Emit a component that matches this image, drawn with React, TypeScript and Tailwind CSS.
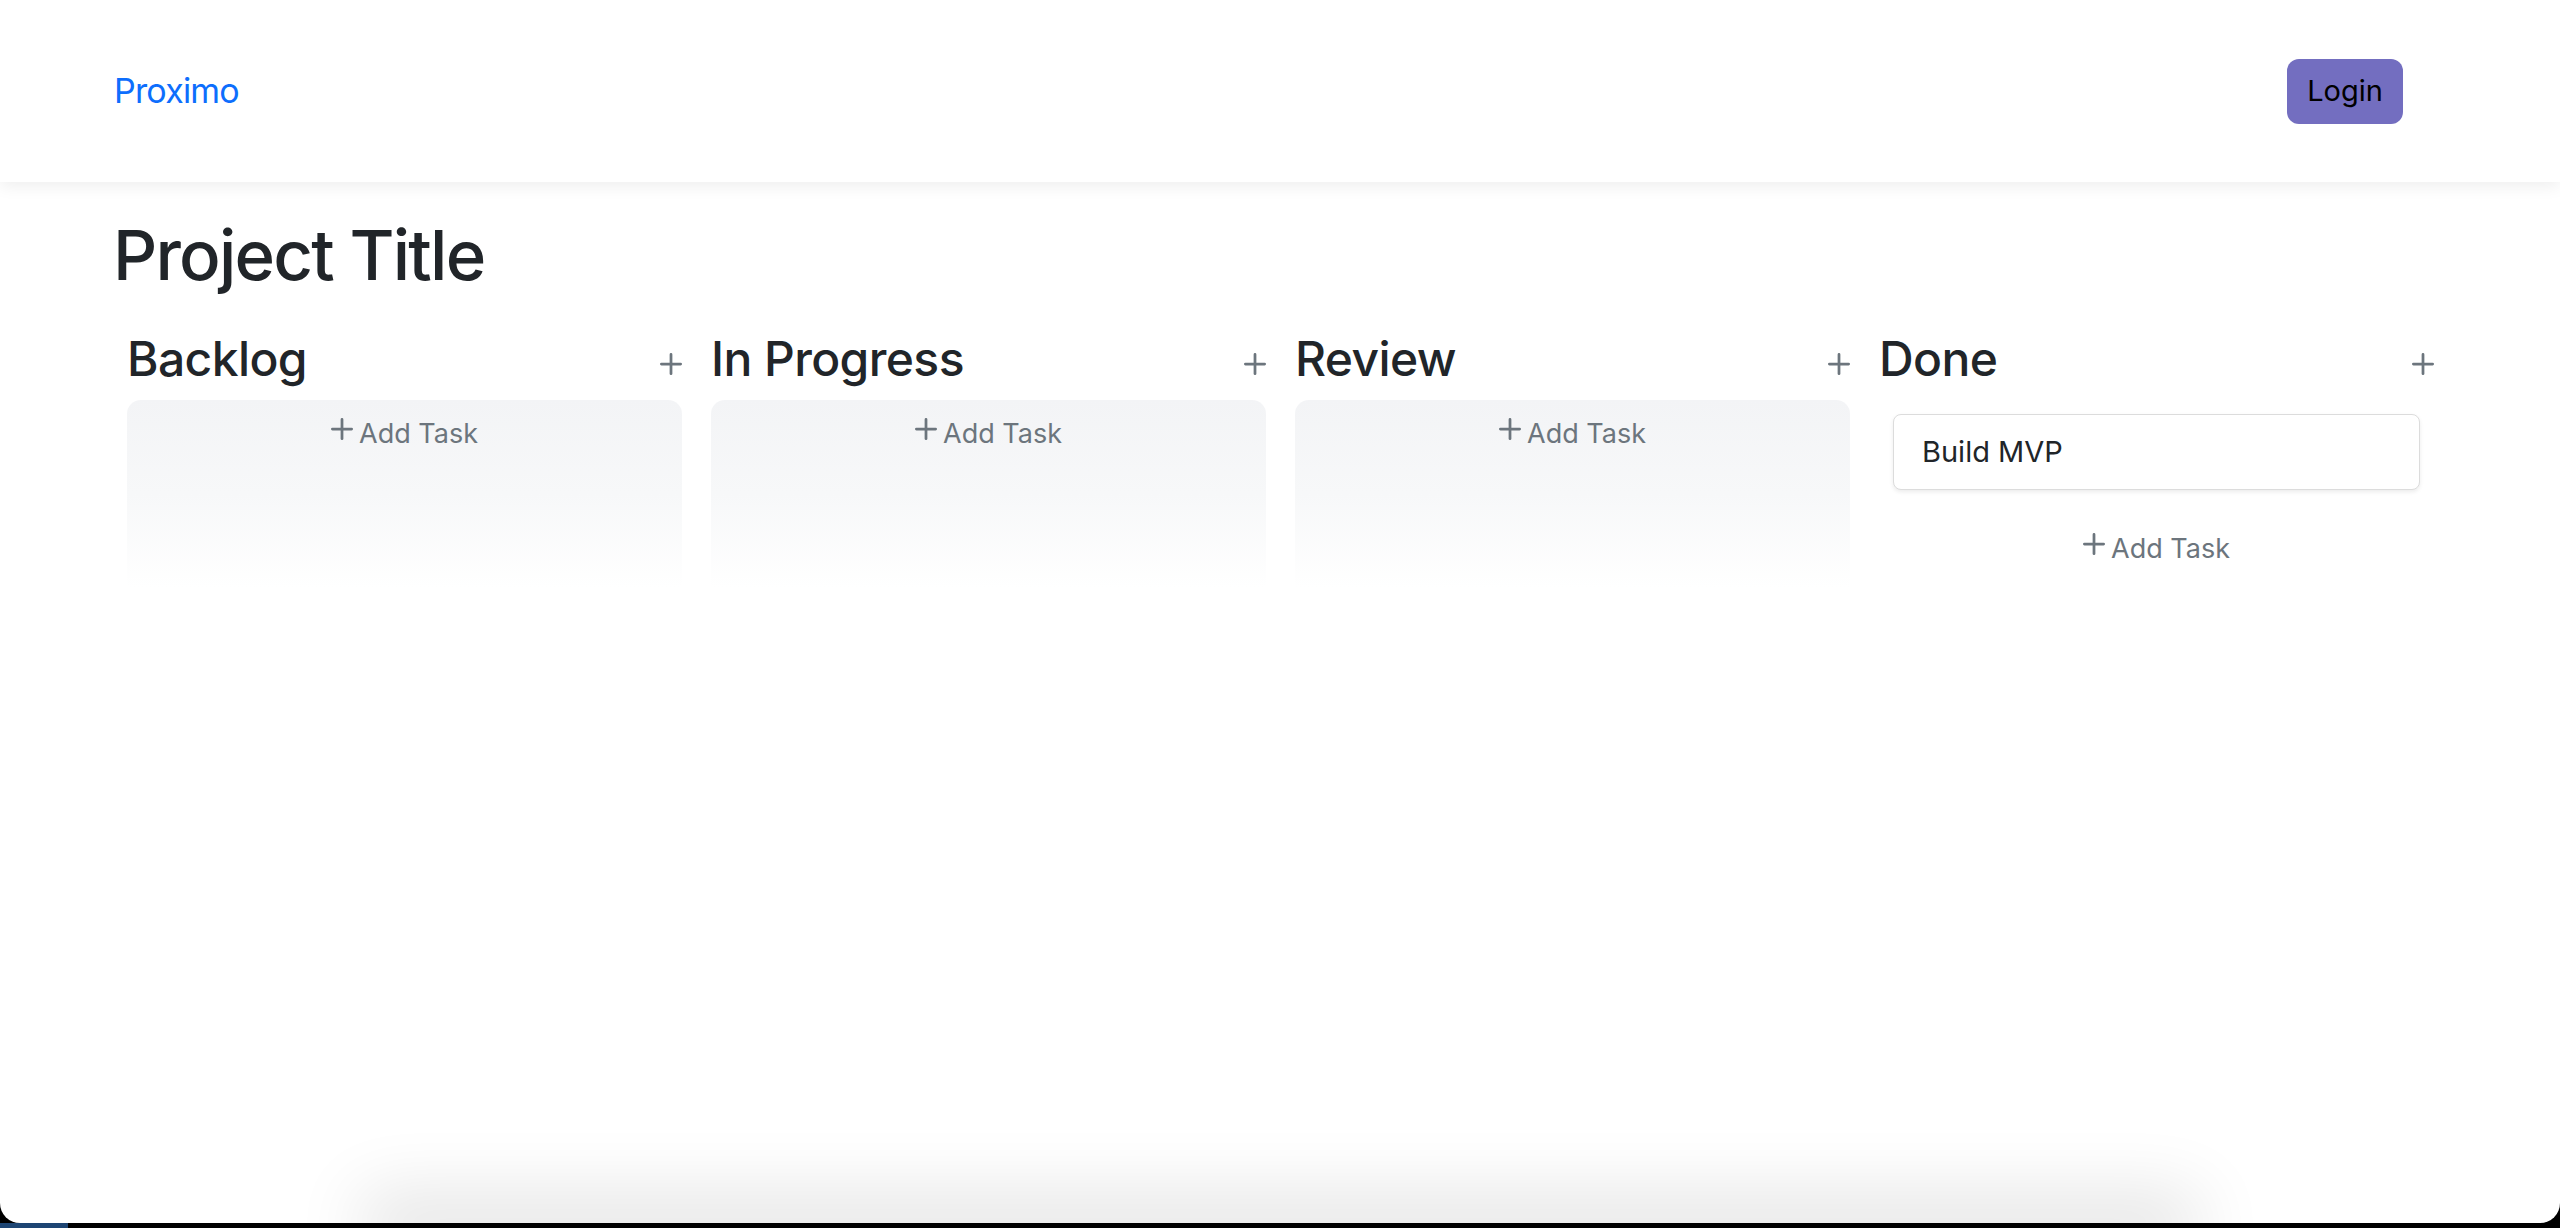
import React from 'react';

interface Column {
  title: string;
  tasks: string[];
}

const columns: Column[] = [
  { title: 'Backlog', tasks: [] },
  { title: 'In Progress', tasks: [] },
  { title: 'Review', tasks: [] },
  { title: 'Done', tasks: ['Build MVP'] },
];

function PlusIcon({ className = '' }: { className?: string }) {
  // bootstrap "plus" glyph, cropped to its own bounds
  return (
    <svg viewBox="4 4 8 8" width={22} height={22} fill="currentColor" className={className}>
      <path d="M8 4a.5.5 0 0 1 .5.5v3h3a.5.5 0 0 1 0 1h-3v3a.5.5 0 0 1-1 0v-3h-3a.5.5 0 0 1 0-1h3v-3A.5.5 0 0 1 8 4" />
    </svg>
  );
}

function AddTask() {
  return (
    <button className="flex items-start justify-center gap-[6px] text-[27px] leading-[39px] text-[#6c757d]">
      <PlusIcon className="mt-[4px] flex-shrink-0" />
      <span>Add Task</span>
    </button>
  );
}

function BoardColumn({ column }: { column: Column }) {
  const hasTasks = column.tasks.length > 0;

  return (
    <div className="flex flex-col">
      {/* Header */}
      <div className="flex h-[57px] items-start justify-between">
        <h3 className="text-[48px] font-medium leading-[57px] tracking-[-0.6px] text-[#212529]">
          {column.title}
        </h3>
        <button className="mt-[23px] text-[#6c757d]">
          <PlusIcon />
        </button>
      </div>

      {/* Drop area */}
      {hasTasks ? (
        <div className="mt-[13px] flex flex-col px-[14px] pt-[14px]">
          {column.tasks.map((task) => (
            <div
              key={task}
              className="flex h-[76px] items-center rounded-[8px] border border-[#dcdcdc] bg-white px-[28px] text-[29px] text-[#212529] shadow-[0_2px_4px_rgba(0,0,0,0.08)]"
            >
              {task}
            </div>
          ))}
          <div className="mt-[39px] flex justify-center">
            <AddTask />
          </div>
        </div>
      ) : (
        <div className="mt-[13px] flex h-[188px] justify-center rounded-t-[14px] bg-gradient-to-b from-[#f3f4f6] via-[#f7f8f9] to-white pt-[14px]">
          <AddTask />
        </div>
      )}
    </div>
  );
}

export default function App() {
  return (
    <div className="flex h-[1228px] w-full flex-col overflow-hidden bg-black font-['Inter',sans-serif]">
      <div className="relative flex h-[1223px] flex-col overflow-hidden rounded-b-[20px] bg-white">
        {/* Navbar */}
        <nav className="relative z-10 flex h-[182px] flex-shrink-0 items-center justify-between bg-white pl-[114px] pr-[157px] shadow-[0_4px_16px_rgba(0,0,0,0.07)]">
          <a className="text-[34px] leading-none tracking-[-0.8px] text-[#0d6efd]">Proximo</a>
          <button className="flex h-[65px] w-[116px] items-center justify-center rounded-[12px] bg-[#736ec0] text-[29px] text-black">
            Login
          </button>
        </nav>

        {/* Board */}
        <main className="flex flex-1 flex-col">
          <h1 className="mt-[30px] pl-[113px] text-[69px] font-medium leading-[86px] tracking-[-1.8px] text-[#212529]">
            Project Title
          </h1>
          <div className="mt-[32px] grid grid-cols-[repeat(4,555px)] gap-[29px] pl-[127px]">
            {columns.map((column) => (
              <BoardColumn key={column.title} column={column} />
            ))}
          </div>
        </main>

        {/* shadow cast from below the window */}
        <div className="mx-[390px] h-0 flex-shrink-0 shadow-[0_0_70px_28px_rgba(0,0,0,0.12)]" />
      </div>
      <div className="flex flex-1">
        <div className="w-[68px] bg-[#1d4573]" />
      </div>
    </div>
  );
}
